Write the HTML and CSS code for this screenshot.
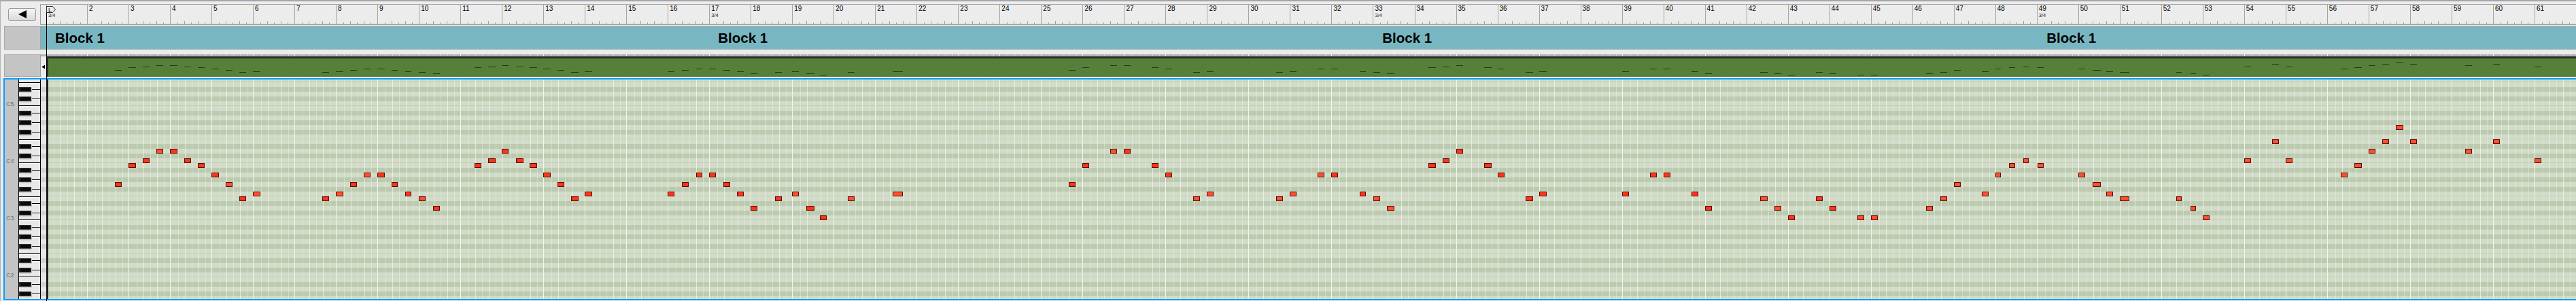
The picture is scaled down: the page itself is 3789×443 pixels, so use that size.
FILE: index.html
```html
<!DOCTYPE html>
<html>

<head>
	<meta charset="UTF-8">
	<meta name="viewport" content="width=device-width, initial-scale=1.0">
	<title>Piano roll</title>
	<link rel="stylesheet" href="styles.css">
</head>

<body>
	<div class="row ruler-row">
		<div class="head">
			<button class="back">
				<svg width="12" height="12" viewBox="0 0 12 12"><polygon points="0,6 12,0 12,12" fill="#000" /></svg>
			</button>
		</div>
		<div class="main ruler" id="ruler"></div>
	</div>

	<div class="row block-row">
		<div class="head cell"></div>
		<div class="main blocks">
			<div class="block">Block 1</div>
			<div class="block">Block 1</div>
			<div class="block">Block 1</div>
			<div class="block">Block 1</div>
		</div>
	</div>

	<div class="row thumb-row">
		<div class="head cell"></div>
		<div class="main thumb">
			<div class="thumb-ticks" id="thumbTicks"></div>
			<div class="thumb-body">
				<div class="marker">
					<svg width="8" height="7" viewBox="0 0 8 7"><rect x="0" y="0" width="8" height="7" rx="3" fill="#fff" /><polygon points="1,3.5 6,0.5 6,6.5" fill="#000" /></svg>
				</div>
				<div class="clip" id="clip"></div>
			</div>
		</div>
	</div>

	<div class="roll">
		<div class="octaves">
			<div class="octave">C5</div>
			<div class="octave">C4</div>
			<div class="octave">C3</div>
			<div class="octave">C2</div>
		</div>
		<div class="piano" id="piano"></div>
		<div class="strip"></div>
		<div class="grid" id="grid">
			<div class="grid-lines" id="gridLines"></div>
		</div>
	</div>

	<div class="playhead"></div>
	<svg class="locator" width="15" height="12" viewBox="0 0 15 12">
		<polygon points="0.5,0.5 9.5,0.5 13.5,5 9.5,9.5 0.5,9.5" fill="#ececec" stroke="#333" />
		<text x="3" y="8.5" class="locator-text">L</text>
	</svg>

	<script src="script.js"></script>
</body>

</html>
```

FILE: styles.css
```css
html {
	box-sizing: border-box;
	font-size: 10px;
}

*,
*:before,
*:after {
	box-sizing: inherit;
}

body {
	margin: 0;
	width: 3789px;
	height: 443px;
	overflow: hidden;
	position: relative;
	border-top: 2px solid #a4a4ac;
	border-left: 1px solid #b0b0b8;
	font-family: "Liberation Sans", Arial, sans-serif;
	background-color: #ececec;
}

.row {
	display: flex;
	padding-left: 5px;
}

.head {
	flex: none;
	width: 53px;
}

.cell {
	background-color: #c4c4c4;
	border: 1px solid #a8a8a8;
	border-right: none;
}

.main {
	flex: 1;
	min-width: 0;
	overflow: hidden;
	border-left: 1px solid #a0a0a0;
}

/* ruler */

.ruler-row {
	margin-top: 4px;
	height: 31px;
}

.back {
	display: flex;
	align-items: center;
	justify-content: center;
	width: 41px;
	height: 19px;
	margin: 6px 0 0 6px;
	padding: 0 0 1px 0;
	border: 1px solid #9a9a9a;
	border-radius: 3px;
	background: linear-gradient(#f6f6f6, #dadada);
}

.ruler {
	display: flex;
	padding-left: 8px;
	border-top: 1px solid #a8a8a8;
	border-bottom: 2px solid #a8a8a8;
}

.ruler .bar {
	display: flex;
	flex-direction: column;
	border-left: 1px solid #a4a4a4;
}

.bar {
	flex: none;
	width: 61.017px;
}

.bar:first-child {
	width: 60px;
}

.num {
	height: 12px;
	padding-left: 2px;
	font-size: 10px;
	line-height: 12px;
	color: #000;
}

.sig {
	padding-left: 2px;
	font-size: 7.5px;
	line-height: 8px;
	color: #222;
}

.subs {
	display: flex;
	margin-top: auto;
	height: 100%;
}

.ruler .subs {
	height: 5px;
	margin-left: -1px;
	align-items: flex-end;
}

.sub {
	flex: none;
	width: 10px;
}

.sub:first-child {
	width: 11px;
}

.sub:last-child {
	flex: 1;
}

.bar:first-child .sub:first-child {
	width: 10px;
}

.ruler .sub {
	height: 2px;
	border-left: 1px solid #a0a0a0;
}

.ruler .sub:first-child {
	border-left: none;
}

.ruler .sub:nth-child(3),
.ruler .sub:nth-child(5) {
	height: 4px;
}

/* blocks */

.block-row {
	margin-top: 1px;
	height: 35px;
}

.blocks {
	display: flex;
	padding-left: 8px;
	background-color: #78b7c2;
	border-top: 1px solid #a8a8a8;
	border-bottom: 1px solid #a8a8a8;
}

.block {
	flex: none;
	width: 977px;
	padding-left: 13px;
	font-size: 20.5px;
	font-weight: bold;
	line-height: 33px;
	color: #000;
}

.block:first-child {
	width: 975.25px;
}

/* overview clip */

.thumb-row {
	margin-top: 7px;
	height: 33px;
}

.thumb {
	display: flex;
	flex-direction: column;
}

.thumb-ticks {
	flex: none;
	display: flex;
	height: 3px;
	padding-left: 8px;
	background-color: #b2b2b2;
}

.thumb-ticks .bar {
	border-left: 1px solid #ececec;
}

.thumb-ticks .sub {
	border-left: 1px solid #cfcfcf;
}

.thumb-ticks .sub:first-child {
	border-left: none;
}

.thumb-body {
	flex: 1;
	display: flex;
}

.marker {
	flex: none;
	display: flex;
	align-items: center;
	width: 8px;
	padding-top: 1px;
}

.clip {
	flex: 1;
	position: relative;
	background-color: #56803a;
	border-top: 3px solid #2b2b2b;
	border-left: 3px solid #2b2b2b;
}

.dash {
	position: absolute;
	height: 1px;
	background-color: #24381a;
}

/* piano roll */

.roll {
	display: flex;
	height: 327px;
	margin: 2px 0 0 4px;
	border: 2px solid #0a9dff;
	border-right: none;
}

.octaves {
	flex: none;
	width: 20px;
	padding-top: 31px;
	background-color: #c4c4c4;
}

.octave {
	height: 84px;
	padding-left: 2px;
	font-size: 9px;
	line-height: 11px;
	color: #66788a;
}

.octave:last-child {
	height: 11px;
}

.piano {
	flex: none;
	position: relative;
	width: 33px;
	overflow: hidden;
	border-left: 1px solid #000;
	border-right: 1px solid #000;
}

.wkey {
	background-color: #e8e8e8;
	border-bottom: 1px solid #000;
	box-shadow: inset 0 1px 0 #fbfbfb;
}

.bkey {
	position: absolute;
	left: 0;
	width: 18px;
	height: 7px;
	background-color: #0a0a0a;
	border: 1px solid #3a3a3a;
	border-left: 2px solid #2a2a2a;
	box-shadow: 1px 1px 0 #c6c6c6, 0 2px 0 #d4d4d4;
}

.strip {
	flex: none;
	width: 8px;
	background-color: #e6e6e6;
	background-image: repeating-linear-gradient(180deg,
			transparent 0 11px, #d2d2d2 11px 18px,
			transparent 18px 25px, #d2d2d2 25px 32px,
			transparent 32px 46px, #d2d2d2 46px 53px,
			transparent 53px 60px, #d2d2d2 60px 67px,
			transparent 67px 74px, #d2d2d2 74px 81px,
			transparent 81px 84px);
}

.grid {
	flex: 1;
	position: relative;
	min-width: 0;
	overflow: hidden;
	background-color: #d2dcc8;
	background-image: repeating-linear-gradient(180deg,
			transparent 0 3px, #bfcbb3 3px 4px,
			transparent 4px 11px, #bccbb0 11px 18px,
			transparent 18px 25px, #bccbb0 25px 32px,
			transparent 32px 38px, #bfcbb3 38px 39px,
			transparent 39px 46px, #bccbb0 46px 53px,
			transparent 53px 60px, #bccbb0 60px 67px,
			transparent 67px 74px, #bccbb0 74px 81px,
			transparent 81px 84px);
}

.grid:before {
	content: "";
	position: absolute;
	left: 0;
	top: 0;
	bottom: 0;
	width: 3px;
	z-index: 2;
	background-color: #1c1c1c;
}

.grid-lines {
	display: flex;
	height: 100%;
}

.grid-lines .bar {
	border-left: 1px solid #f3f5ef;
}

.grid-lines .sub {
	border-left: 1px solid rgba(255, 255, 255, 0.3);
}

.grid-lines .sub:first-child {
	border-left: none;
}

.grid-lines .sub:nth-child(3),
.grid-lines .sub:nth-child(5) {
	border-left-color: rgba(255, 255, 255, 0.55);
}

.note {
	position: absolute;
	height: 7px;
	background-color: #ff3318;
	border: 1px solid #5a0a05;
}

.note.soft {
	background-color: #ff4e30;
}

/* locator */

.playhead {
	position: absolute;
	left: 67px;
	top: 7px;
	bottom: 0;
	width: 1px;
	background-color: #000;
}

.locator {
	position: absolute;
	left: 67px;
	top: 7px;
}

.locator-text {
	font-size: 9px;
	fill: #111;
}
```

FILE: script.js
```js
// x, width, row (rows are 7px, row 0 is at y=219), 1 = lighter velocity
const notes = [
	[169, 10, 7], [189, 11, 3], [210, 10, 2], [230, 10, 0, 1], [250, 11, 0], [271, 10, 2], [291, 10, 3], [311, 11, 5],
	[332, 10, 7, 1], [352, 10, 10], [372, 11, 9, 1], [474, 10, 10], [494, 11, 9, 1], [515, 10, 7], [535, 10, 5, 1],
	[555, 11, 5], [576, 9, 7], [596, 9, 9], [616, 10, 10, 1], [637, 10, 12], [698, 10, 3], [718, 11, 2], [738, 10, 0],
	[759, 11, 2], [779, 11, 3], [799, 11, 5], [820, 10, 7], [840, 11, 10], [860, 11, 9], [982, 10, 9], [1003, 10, 7],
	[1024, 9, 5], [1043, 10, 5], [1064, 10, 7], [1084, 10, 9], [1104, 10, 12], [1140, 10, 10], [1165, 10, 9, 1],
	[1186, 12, 12], [1206, 10, 14], [1247, 10, 10, 1], [1313, 15, 9, 1], [1572, 10, 7], [1592, 10, 3], [1633, 10, 0, 1],
	[1653, 10, 0], [1694, 10, 3], [1714, 10, 5], [1755, 10, 10, 1], [1775, 10, 9, 1], [1877, 10, 10, 1], [1897, 10, 9, 1],
	[1938, 10, 5, 1], [1958, 10, 5], [2000, 9, 9], [2020, 10, 10, 1], [2040, 11, 12, 1], [2101, 11, 3], [2122, 10, 2],
	[2142, 10, 0], [2183, 11, 3], [2203, 10, 5], [2244, 11, 10], [2264, 11, 9], [2386, 10, 9], [2427, 10, 5], [2447, 10, 5],
	[2488, 10, 9], [2508, 10, 12], [2589, 11, 10, 1], [2610, 10, 12, 1], [2630, 10, 14], [2671, 10, 10], [2691, 10, 12],
	[2732, 10, 14, 1], [2752, 10, 14, 1], [2833, 10, 12, 1], [2854, 10, 10, 1], [2874, 10, 7, 1], [2915, 10, 9, 1],
	[2935, 8, 5, 1], [2955, 9, 3, 1], [2976, 8, 2, 1], [2997, 9, 3, 1], [3057, 10, 5, 1], [3078, 12, 7, 1], [3098, 10, 9, 1],
	[3118, 14, 10, 1], [3201, 8, 10, 1], [3222, 8, 12, 1], [3240, 10, 14, 1], [3301, 10, 2, 1], [3342, 10, -2, 1],
	[3362, 10, 2, 1], [3443, 10, 5, 1], [3463, 11, 3, 1], [3484, 10, 0, 1], [3504, 10, -2, 1], [3524, 11, -5, 1],
	[3545, 10, -2, 1], [3626, 10, 0, 1], [3667, 10, -2, 1], [3728, 10, 2, 1]
];

function el(parent, className, text) {
	const node = document.createElement("div");
	node.className = className;
	if (text !== undefined) node.textContent = text;
	parent.appendChild(node);
	return node;
}

function addSubs(bar) {
	const subs = el(bar, "subs");
	for (let i = 0; i < 6; i++) el(subs, "sub");
}

function addBars(parent, withLabels) {
	for (let n = 1; n <= 61; n++) {
		const bar = el(parent, "bar");
		if (withLabels) {
			el(bar, "num", n === 1 ? "\u00a0" : n);
			if (n === 1 || n === 17 || n === 33 || n === 49) el(bar, "sig", "3/4");
		}
		addSubs(bar);
	}
}

addBars(document.getElementById("ruler"), true);
addBars(document.getElementById("thumbTicks"), false);
addBars(document.getElementById("gridLines"), false);

// white keys, heights repeat every octave (84px)
const piano = document.getElementById("piano");
const octave = [10, 14, 10, 11, 14, 14, 11];
el(piano, "wkey").style.height = "5px";
octave.concat(octave, octave, octave).forEach(function (h) {
	el(piano, "wkey").style.height = h + "px";
});

// black keys, y relative to the top of the roll
[11, 25, 46, 60, 74].forEach(function (y) {
	for (let o = 0; o < 4; o++) {
		if (y + o * 84 > 320) continue;
		el(piano, "bkey").style.top = (y + o * 84) + "px";
	}
});

const grid = document.getElementById("grid");
const clip = document.getElementById("clip");
notes.forEach(function (n) {
	const note = el(grid, n[3] ? "note soft" : "note");
	note.style.left = (n[0] - 68) + "px";
	note.style.top = (219 + n[2] * 7 - 117) + "px";
	note.style.width = n[1] + "px";

	const dash = el(clip, "dash");
	dash.style.left = (n[0] - 71) + "px";
	dash.style.top = (96 + n[2] - 86) + "px";
	dash.style.width = n[1] + "px";
});
```
